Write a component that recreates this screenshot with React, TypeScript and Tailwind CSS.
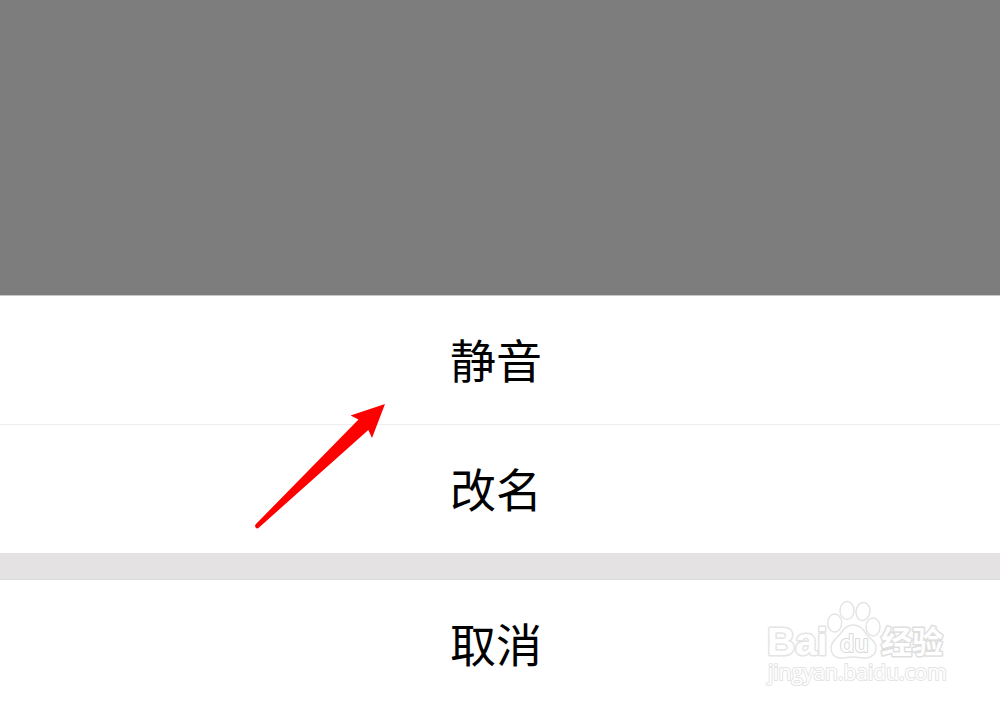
function SheetButton({ label }: { label: string }) {
  return (
    <button
      type="button"
      className="flex h-32 w-full items-center justify-center bg-white pr-2 pb-1 text-[46px] leading-none text-black"
    >
      {label}
    </button>
  );
}

function Arrow() {
  return (
    <svg
      viewBox="0 0 132 126"
      className="pointer-events-none absolute top-[403px] left-[254px] h-[126px] w-[132px]"
      aria-hidden="true"
    >
      <path
        d="M131 1 L96.5 12.5 L104.5 16.5 L1.5 121.5 Q0.5 123.5 2 125 Q3.5 126 5 124.5 L114.3 27 L118 35 Z"
        fill="#ff0000"
      />
    </svg>
  );
}

function Watermark() {
  return (
    <svg
      viewBox="0 0 190 96"
      className="pointer-events-none absolute right-[48px] bottom-[14px] h-[96px] w-[190px]"
      role="img"
      aria-label="Baidu 经验 jingyan.baidu.com"
    >
      <g fill="#fff" stroke="#e4e4e4" strokeWidth="1.5" strokeLinejoin="round">
        <text x="5" y="57" fontSize="39" fontWeight="700" fontFamily="Liberation Sans, sans-serif" strokeWidth="3" paintOrder="stroke">
          Bai
        </text>
        <ellipse cx="72.7" cy="25" rx="7" ry="9" />
        <ellipse cx="85" cy="12.5" rx="7" ry="9" />
        <ellipse cx="101" cy="13.5" rx="7" ry="9" transform="rotate(8 101 13.5)" />
        <ellipse cx="111" cy="29" rx="7" ry="9" />
        <path d="M91.5 27 C98 27 101 31 105 37 C109 42 114 43 114 50 C114 57 108 60 103 60 C98 60 96 59 91.5 59 C87 59 83 60 78 60 C73 60 69 56 69 50 C69 43 75 40 79 35 C82 30 85 27 91.5 27 Z" />
        <text x="78" y="54" fontSize="23" fontWeight="600" fontFamily="Open Sans, sans-serif" stroke="#d8d8d8" strokeWidth="2" paintOrder="stroke">
          du
        </text>
        <text x="119" y="55" fontSize="31" fontWeight="700" fontFamily="Noto Sans CJK SC, sans-serif" stroke="#dedede" strokeWidth="3" paintOrder="stroke">
          经验
        </text>
        <text x="6" y="82" fontSize="21" fontWeight="400" fontFamily="Open Sans, sans-serif" strokeWidth="2" paintOrder="stroke">
          jingyan.baidu.com
        </text>
      </g>
    </svg>
  );
}

export default function App() {
  return (
    <main className="relative flex min-h-screen w-full flex-col bg-[#7d7d7d] font-['Noto_Sans_CJK_SC',sans-serif]">
      <div className="flex-1" />
      <section aria-label="操作" className="border-t border-[#c8c8c8] bg-white">
        <SheetButton label="静音" />
        <div className="h-px bg-[#eeeeee]" />
        <SheetButton label="改名" />
        <div className="h-[27px] border-b border-[#dad9da] bg-[#e4e2e3]" />
        <SheetButton label="取消" />
      </section>
      <Arrow />
      <Watermark />
    </main>
  );
}
